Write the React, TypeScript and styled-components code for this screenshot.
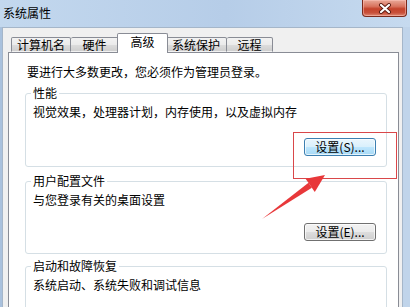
import React from "react";
import styled, { createGlobalStyle } from "styled-components";

const GlobalStyle = createGlobalStyle`
  html, body {
    margin: 0;
    padding: 0;
    background: #c3d8ee;
  }
  body {
    font-family: "Noto Sans CJK SC", "Liberation Sans", sans-serif;
    font-size: 12px;
    color: #1a1a1a;
  }
`;

const tabs = [
  { label: "计算机名", width: 60 },
  { label: "硬件", width: 48 },
  { label: "高级", width: 47, active: true },
  { label: "系统保护", width: 61 },
  { label: "远程", width: 46 },
];

export default function App() {
  return (
    <Window>
      <GlobalStyle />
      <TitleBar>
        <Title>系统属性</Title>
        <CloseButton aria-label="关闭">
          <svg width="14" height="11" viewBox="0 0 14 11">
            <path d="M3 2 L11 9 M11 2 L3 9" stroke="#5a1a10" strokeWidth="4" strokeLinecap="round" />
            <path d="M3 2 L11 9 M11 2 L3 9" stroke="#ffffff" strokeWidth="2.2" strokeLinecap="round" />
          </svg>
        </CloseButton>
      </TitleBar>
      <Frame>
        <Body>
          <TabRow>
            {tabs.map((t) => (
              <Tab key={t.label} $active={!!t.active} $width={t.width}>
                {t.label}
              </Tab>
            ))}
          </TabRow>
          <Panel>
            <Intro>要进行大多数更改，您必须作为管理员登录。</Intro>

            <Group $mt={7}>
              <Legend>性能</Legend>
              <Desc>视觉效果，处理器计划，内存使用，以及虚拟内存</Desc>
              <ButtonRow $mt={19} $pb={10}>
                <Button $focused>设置(S)...</Button>
              </ButtonRow>
            </Group>

            <Group $mt={7}>
              <Legend>用户配置文件</Legend>
              <Desc>与您登录有关的桌面设置</Desc>
              <ButtonRow $mt={16} $pb={12}>
                <Button>设置(E)...</Button>
              </ButtonRow>
            </Group>

            <Group $mt={5}>
              <Legend>启动和故障恢复</Legend>
              <Desc>系统启动、系统失败和调试信息</Desc>
              <ButtonRow $mt={15} $pb={12}>
                <Button aria-label="设置(T)..." />
              </ButtonRow>
            </Group>
          </Panel>
        </Body>
      </Frame>

      {/* red annotation drawn over the screenshot */}
      <Annotation width="410" height="307" viewBox="0 0 410 307">
        <rect x="293.5" y="132.5" width="103" height="46" fill="none" stroke="#d9474a" strokeWidth="1" />
        <polygon points="262,219 311.9,187.8 308.5,182.8" fill="#e8383a" />
        <polygon points="325,175 305.6,178.7 314.8,191.9" fill="#e8383a" />
      </Annotation>
    </Window>
  );
}

const Window = styled.div`
  position: relative;
  width: 410px;
  height: 307px;
  overflow: hidden;
  display: flex;
  flex-direction: column;
  background: linear-gradient(90deg, #c3d8ee 0%, #b6cde8 55%, #c6daef 100%);
`;

const TitleBar = styled.div`
  height: 27px;
  flex: none;
  display: flex;
  justify-content: space-between;
  align-items: flex-start;
  padding-left: 3px;
`;

const Title = styled.div`
  margin-top: 6px;
  line-height: 14px;
  color: #000;
`;

const CloseButton = styled.div`
  width: 45px;
  height: 17px;
  margin-right: 3px;
  box-sizing: border-box;
  border: 1px solid #7a2a1c;
  border-top: none;
  border-radius: 0 0 4px 4px;
  background: linear-gradient(180deg, #e9a998 0%, #d8735e 40%, #c4432b 55%, #c8503a 80%, #de8a74 100%);
  display: flex;
  align-items: center;
  justify-content: center;
  box-shadow: inset 0 0 0 1px rgba(255, 200, 190, 0.5);
`;

const Frame = styled.div`
  flex: 1;
  min-height: 0;
  display: flex;
  padding: 0 7px 0 2px;
  background: linear-gradient(90deg, #a9c1dd 0, #a9c1dd 2px, #c0d4ea 2px);
`;

const Body = styled.div`
  flex: 1;
  min-width: 0;
  display: flex;
  flex-direction: column;
  background: #f0f0f0;
  border: 1px solid #a5b6c9;
  border-bottom: none;
  padding: 5px 3px 0 5px;
  overflow: hidden;
`;

const TabRow = styled.div`
  display: flex;
  align-items: flex-end;
  padding-left: 3px;
  height: 20px;
  margin-bottom: -1px;
  position: relative;
  z-index: 1;
`;

const Tab = styled.div<{ $active: boolean; $width: number }>`
  box-sizing: border-box;
  width: ${(p) => p.$width + (p.$active ? 4 : 0)}px;
  height: ${(p) => (p.$active ? 20 : 15)}px;
  margin: ${(p) => (p.$active ? "0 -2px 0" : "0 0 1px")};
  border: 1px solid #898c95;
  border-bottom: ${(p) => (p.$active ? "none" : "1px solid transparent")};
  border-left-width: ${(p) => (p.$active ? 1 : 0)}px;
  border-radius: 2px 2px 0 0;
  background: ${(p) =>
    p.$active
      ? "#ffffff"
      : "linear-gradient(180deg, #f2f2f2 0%, #ebebeb 50%, #dddddd 51%, #cfcfcf 100%)"};
  position: relative;
  z-index: ${(p) => (p.$active ? 2 : 1)};
  display: flex;
  justify-content: center;
  align-items: ${(p) => (p.$active ? "flex-start" : "center")};
  padding-top: ${(p) => (p.$active ? 1 : 0)}px;
  line-height: 14px;
  color: #000;

  &:first-child {
    border-left-width: 1px;
  }
`;

const Panel = styled.div`
  flex: 1;
  background: #ffffff;
  border: 1px solid #898c95;
  border-bottom: none;
  padding: 12px 11px 0 16px;
  overflow: hidden;
`;

const Intro = styled.div`
  line-height: 14px;
  padding-left: 2px;
  color: #000;
`;

const Group = styled.fieldset<{ $mt: number }>`
  margin: ${(p) => p.$mt}px 0 0;
  padding: 5px 0 0 7px;
  border: 1px solid #d5dfe5;
  border-radius: 3px;
  min-width: 0;
  box-shadow: inset 1px 1px 0 #ffffff;
`;

const Legend = styled.legend`
  padding: 0 2px;
  margin-left: -2px;
  line-height: 14px;
  color: #000;
`;

const Desc = styled.div`
  line-height: 14px;
  color: #000;
`;

const ButtonRow = styled.div<{ $mt: number; $pb: number }>`
  display: flex;
  justify-content: flex-end;
  margin-top: ${(p) => p.$mt}px;
  padding: 0 10px ${(p) => p.$pb}px 0;
`;

const Button = styled.div<{ $focused?: boolean }>`
  box-sizing: border-box;
  width: 72px;
  height: 18px;
  border: 1px solid ${(p) => (p.$focused ? "#3c7fb1" : "#707070")};
  border-radius: 3px;
  background: ${(p) =>
    p.$focused
      ? "linear-gradient(180deg, #eaf6fd 0%, #d9f0fc 50%, #bee6fd 51%, #a7d9f5 100%)"
      : "linear-gradient(180deg, #f2f2f2 0%, #ebebeb 50%, #dddddd 51%, #cfcfcf 100%)"};
  box-shadow: inset 0 0 0 1px rgba(255, 255, 255, 0.7);
  display: flex;
  align-items: center;
  justify-content: center;
  line-height: 14px;
  color: #000;
`;

const Annotation = styled.svg`
  position: absolute;
  left: 0;
  top: 0;
  pointer-events: none;
`;
